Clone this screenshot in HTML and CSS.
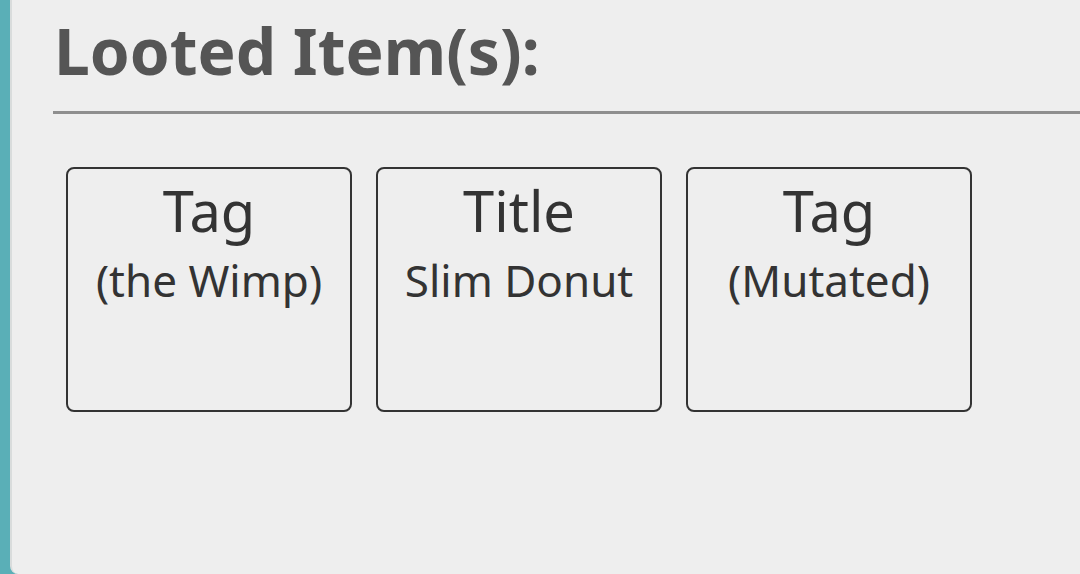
FILE: index.html
```html
<!DOCTYPE html>
<html>
<head>
<meta charset="utf-8">
<link rel="stylesheet" href="styles.css">
</head>
<body>
<div class="page">
  <div class="panel">
    <h1 class="heading">Looted Item(s):</h1>
    <div class="rule"></div>
    <div class="items">
      <div class="item">
        <div class="item-type">Tag</div>
        <div class="item-name">(the Wimp)</div>
      </div>
      <div class="item">
        <div class="item-type">Title</div>
        <div class="item-name">Slim Donut</div>
      </div>
      <div class="item">
        <div class="item-type">Tag</div>
        <div class="item-name">(Mutated)</div>
      </div>
    </div>
  </div>
</div>
</body>
</html>
```
FILE: styles.css
```css
html, body {
  margin: 0;
  padding: 0;
  width: 1080px;
  height: 574px;
  overflow: hidden;
  background: #5aafb7;
  font-family: "Noto Sans", "Open Sans", sans-serif;
}
.page {
  height: 574px;
  padding-left: 10px;
  box-sizing: border-box;
  display: flex;
}
.panel {
  flex: 1;
  height: 574px;
  box-sizing: border-box;
  background: #eeeeee;
  border-left: 2px solid #d9dcdc;
  border-bottom-left-radius: 8px;
  padding: 12px 0 0 41px;
}
.heading {
  margin: 0;
  font-size: 64px;
  font-weight: 700;
  line-height: 78px;
  color: #555555;
  padding-left: 1px;
}
.rule {
  height: 3px;
  background: #8e8e8e;
  margin-top: 21px;
}
.items {
  display: flex;
  gap: 24px;
  margin-top: 53px;
  padding-left: 13px;
}
.item {
  width: 286px;
  height: 245px;
  box-sizing: border-box;
  border: 2px solid #333333;
  border-radius: 8px;
  text-align: center;
  color: #333333;
  padding-top: 6px;
}
.item-type {
  font-size: 56px;
  line-height: 70px;
}
.item-name {
  font-size: 44px;
  line-height: 70px;
}
```
